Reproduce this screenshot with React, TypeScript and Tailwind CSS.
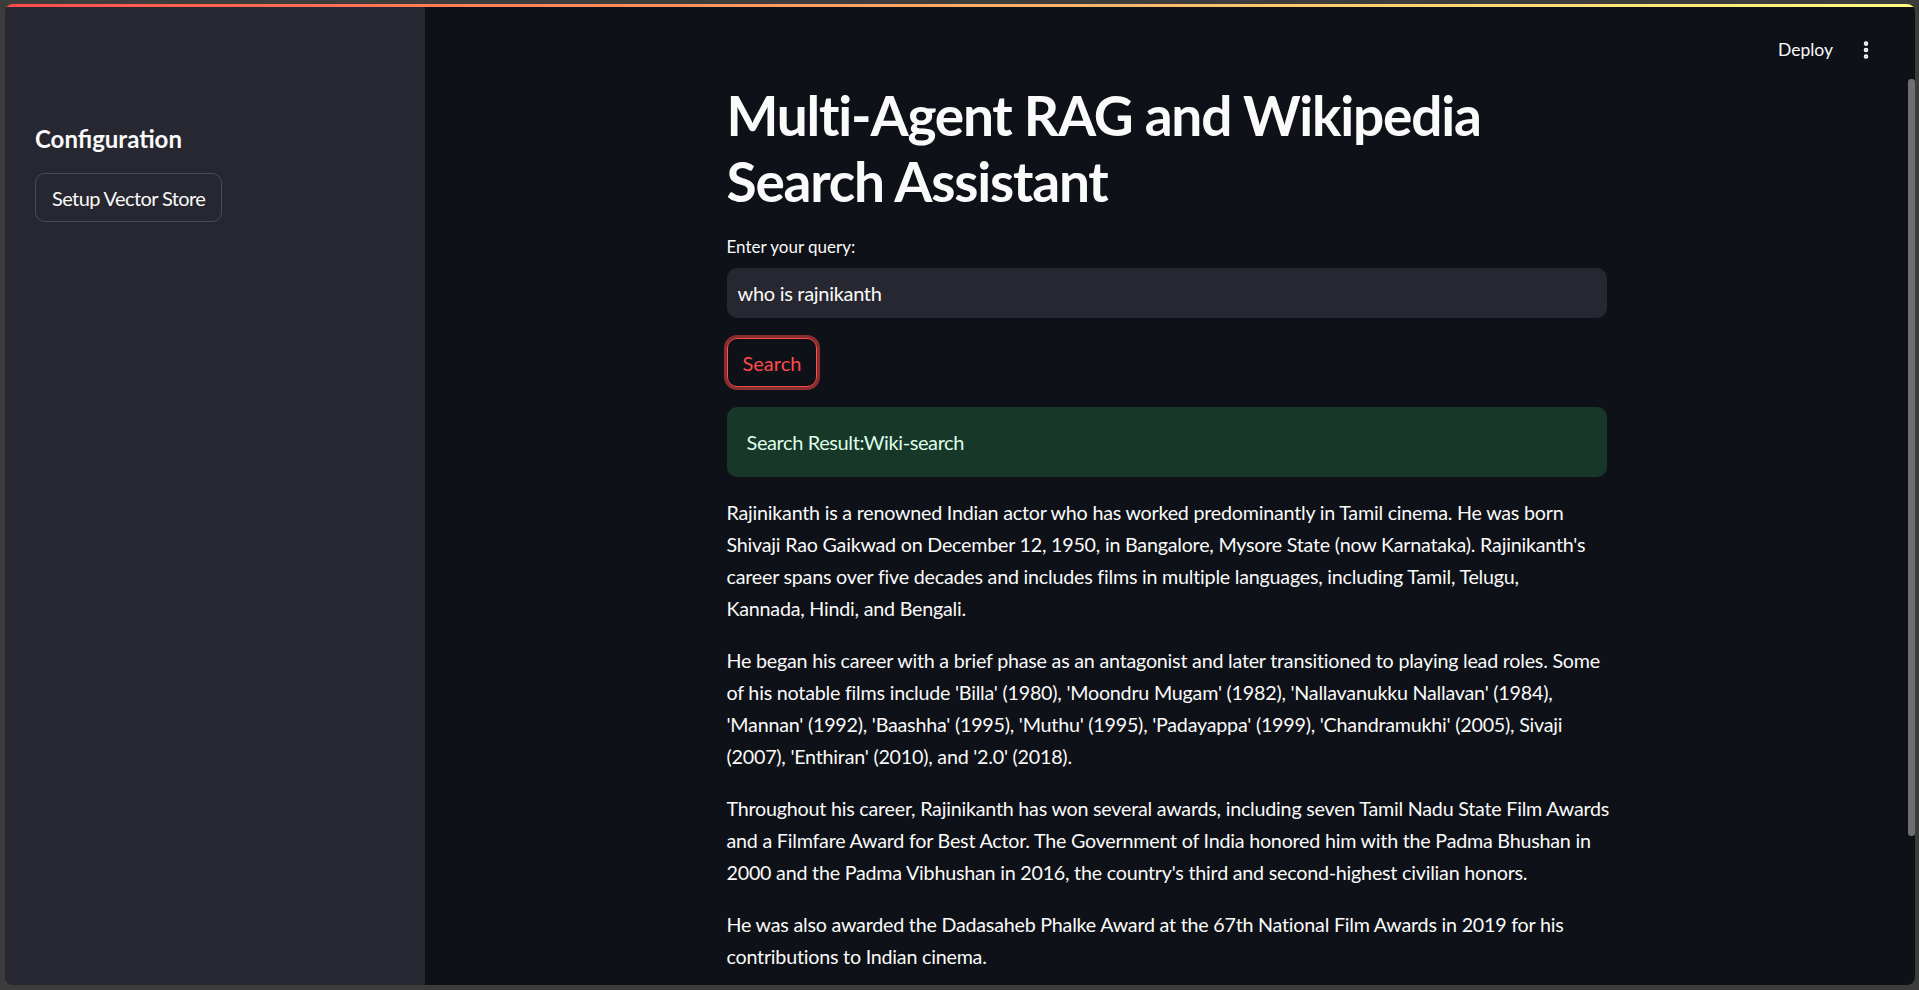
import { EllipsisVertical } from "lucide-react";

const para1 = [
    "Rajinikanth is a renowned Indian actor who has worked predominantly in Tamil cinema. He was born",
    "Shivaji Rao Gaikwad on December 12, 1950, in Bangalore, Mysore State (now Karnataka). Rajinikanth's",
    "career spans over five decades and includes films in multiple languages, including Tamil, Telugu,",
    "Kannada, Hindi, and Bengali.",
];

const para2 = [
    "He began his career with a brief phase as an antagonist and later transitioned to playing lead roles. Some",
    "of his notable films include 'Billa' (1980), 'Moondru Mugam' (1982), 'Nallavanukku Nallavan' (1984),",
    "'Mannan' (1992), 'Baashha' (1995), 'Muthu' (1995), 'Padayappa' (1999), 'Chandramukhi' (2005), Sivaji",
    "(2007), 'Enthiran' (2010), and '2.0' (2018).",
];

const para3 = [
    "Throughout his career, Rajinikanth has won several awards, including seven Tamil Nadu State Film Awards",
    "and a Filmfare Award for Best Actor. The Government of India honored him with the Padma Bhushan in",
    "2000 and the Padma Vibhushan in 2016, the country's third and second-highest civilian honors.",
];

const para4 = [
    "He was also awarded the Dadasaheb Phalke Award at the 67th National Film Awards in 2019 for his",
    "contributions to Indian cinema.",
];

const Paragraph = ({ lines }: { lines: string[] }) => (
    <p className="text-[19.7px] leading-[32px] tracking-[-0.22px] text-[#fafafa] mb-[20px] last:mb-0">
        {lines.map((line, i) => (
            <span key={i} className="block whitespace-nowrap">{line}</span>
        ))}
    </p>
);

export default function App() {
    return (
        <div className="h-[990px] w-full bg-[#3c3c3c] pt-[4px] pl-[5px] pr-[4px] pb-[5px] font-['Lato',sans-serif]">
            <div className="relative h-full rounded-[8px] overflow-hidden flex">
                {/* top decoration */}
                <div className="absolute top-0 left-0 right-0 h-[3px] bg-gradient-to-r from-[#ff4b4b] to-[#fffd80] z-20" />

                {/* Sidebar */}
                <aside className="w-[420px] shrink-0 h-full bg-[#262730] px-[30px] pt-[117px]">
                    <h2 className="text-[24px] leading-[36px] font-bold text-[#fafafa]">Configuration</h2>
                    <button className="mt-[16px] h-[49px] px-[16px] rounded-[10px] border border-[#4b4c55] bg-[#262730] text-[20px] tracking-[-0.6px] text-[#fafafa]">
                        Setup Vector Store
                    </button>
                </aside>

                {/* Main */}
                <main className="relative flex-1 h-full bg-[#0e1117] overflow-hidden flex">
                    <div className="absolute top-[33px] right-[38px] flex items-center gap-[22px] z-10">
                        <span className="text-[17.5px] text-[#fafafa]">Deploy</span>
                        <EllipsisVertical className="w-[22px] h-[22px] text-[#fafafa]" strokeWidth={3} />
                    </div>

                    <div className="flex-1 min-w-0 flex justify-center">
                        <div className="w-[880px] pt-[78px] flex flex-col gap-[20px]">
                            <h1 className="text-[55px] leading-[66px] font-bold text-[#fafafa] tracking-[-1.2px]">
                                Multi-Agent RAG and Wikipedia
                                <br />
                                Search Assistant
                            </h1>

                            <div className="flex flex-col">
                                <label className="text-[17px] leading-[26px] text-[#fafafa] mb-[8px]">Enter your query:</label>
                                <div className="h-[50px] rounded-[10px] bg-[#262730] px-[11px] flex items-center text-[20px] tracking-[-0.3px] text-[#fafafa]">
                                    who is rajnikanth
                                </div>
                            </div>

                            <div>
                                <button className="h-[49px] px-[15px] rounded-[10px] border border-[#ff4b4b] text-[#ff4b4b] text-[20px] shadow-[0_0_0_3px_rgba(255,75,75,0.5)]">
                                    Search
                                </button>
                            </div>

                            <div className="h-[70px] rounded-[10px] bg-[#173828] px-[20px] flex items-center text-[20px] tracking-[-0.4px] text-[#dffde9]">
                                Search Result:Wiki-search
                            </div>

                            <div>
                                <Paragraph lines={para1} />
                                <Paragraph lines={para2} />
                                <Paragraph lines={para3} />
                                <Paragraph lines={para4} />
                            </div>
                        </div>
                    </div>

                    {/* scrollbar */}
                    <div className="w-[7px] shrink-0 h-full pt-[75px]">
                        <div className="h-[757px] w-full rounded-[3px] bg-[#6e6e74]" />
                    </div>
                </main>
            </div>
        </div>
    );
}
